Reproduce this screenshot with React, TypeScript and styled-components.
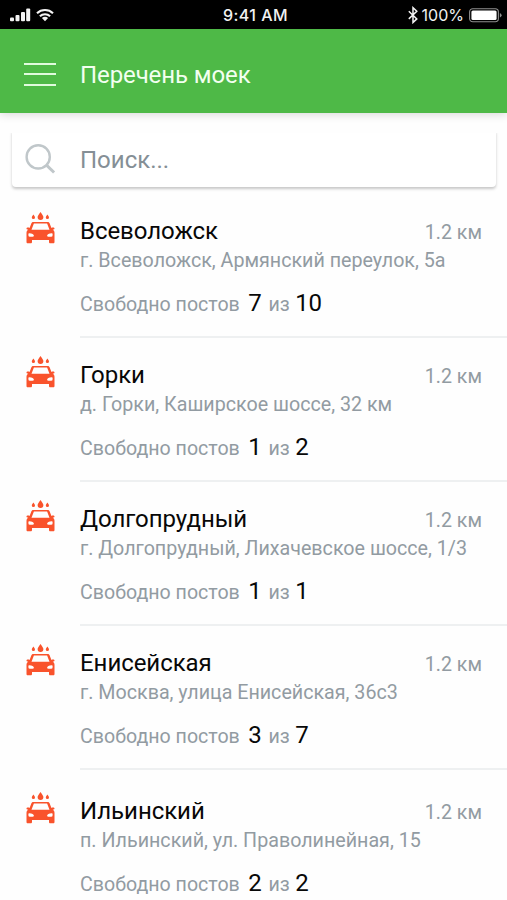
import React from "react";
import styled, { createGlobalStyle } from "styled-components";

const GlobalStyle = createGlobalStyle`
  * { box-sizing: border-box; }
  html, body { margin: 0; padding: 0; background: #fefefe; overflow: hidden; }
  body { font-family: Roboto, "Noto Sans", sans-serif; }
`;

const Screen = styled.div`
  width: 507px;
  height: 900px;
  overflow: hidden;
  display: flex;
  flex-direction: column;
  background: #fefefe;
`;

const StatusBar = styled.div`
  flex: none;
  height: 29px;
  background: #000;
  color: #f2f2f2;
  display: grid;
  grid-template-columns: 1fr auto 1fr;
  align-items: center;
  padding: 1px 5px 0 10px;
  font: 500 15.5px/20px Inter, "Liberation Sans", sans-serif;
`;

const StatusGroup = styled.div<{ $end?: boolean }>`
  display: flex;
  align-items: center;
  justify-content: ${(p) => (p.$end ? "flex-end" : "flex-start")};
  gap: 5px;
`;

const Time = styled.span`
  font-weight: 500;
  font-size: 16px;
  letter-spacing: 0.45px;
  margin-right: 1px;
`;

const Percent = styled.span`
  font-weight: 400;
  font-size: 16px;
  margin-left: -1px;
`;

const Header = styled.header`
  flex: none;
  height: 84px;
  background: #4eb947;
  box-shadow: 0 1px 9px rgba(0, 0, 0, 0.17);
  display: flex;
  align-items: center;
  padding: 7px 24px 0;
`;

const MenuButton = styled.button`
  width: 32px;
  height: 23px;
  margin-bottom: 1px;
  padding: 0;
  border: 0;
  background: none;
  display: flex;
  flex-direction: column;
  justify-content: space-between;
`;

const MenuLine = styled.span`
  display: block;
  width: 32px;
  height: 2px;
  background: #e0fbdd;
`;

const Heading = styled.h1`
  margin: 0 0 0 24px;
  color: #f2fff0;
  font-weight: 400;
  font-size: 24px;
  line-height: 30px;
  letter-spacing: -0.1px;
`;

const SearchBox = styled.label`
  flex: none;
  margin: 16px 11px 0 12px;
  height: 58px;
  border-radius: 4px;
  background: #fff;
  box-shadow: 0 2px 3px rgba(0, 0, 0, 0.22);
  clip-path: inset(4px -6px -8px -6px);
  display: flex;
  align-items: center;
  padding: 4px 12px 0;
  gap: 23px;
`;

const SearchInput = styled.input`
  flex: 1;
  min-width: 0;
  padding: 0;
  border: 0;
  outline: 0;
  background: none;
  font: 400 24px/30px Roboto, sans-serif;
  &::placeholder { color: #858f96; opacity: 1; }
`;

const List = styled.ul`
  list-style: none;
  margin: 20px 0 0;
  padding: 0;
`;

const Row = styled.li<{ $offset?: number }>`
  display: flex;
  height: 144px;
  margin-top: ${(p) => p.$offset ?? 0}px;
  padding-left: 25px;
`;

const IconCell = styled.div`
  flex: none;
  width: 55px;
  padding-top: 4px;
`;

const Details = styled.div<{ $last?: boolean }>`
  flex: 1;
  min-width: 0;
  height: 131px;
  padding-top: 9px;
  border-bottom: 2px solid ${(p) => (p.$last ? "transparent" : "#eef0f1")};
`;

const TitleLine = styled.div`
  display: flex;
  justify-content: space-between;
  align-items: baseline;
  padding-right: 25px;
  height: 30px;
`;

const Name = styled.h2`
  margin: 0;
  font-weight: 400;
  font-size: 24px;
  line-height: 30px;
  letter-spacing: -0.05px;
  color: #080808;
`;

const Distance = styled.span`
  font-size: 19.6px;
  line-height: 30px;
  color: #929ba2;
`;

const Address = styled.div`
  margin-top: 2px;
  font-size: 19.68px;
  line-height: 26px;
  color: #929ba2;
  white-space: nowrap;
`;

const Slots = styled.div`
  display: flex;
  align-items: baseline;
  margin-top: 14px;
  font-size: 19.6px;
  line-height: 30px;
  color: #929ba2;
  white-space: nowrap;
`;

const Count = styled.b`
  font-weight: 400;
  font-size: 24px;
  letter-spacing: -0.3px;
  color: #080808;
  margin: 0 7px 0 8.5px;
`;

const Total = styled(Count)`
  margin: 0 0 0 5.5px;
`;

const Signal = () => (
  <svg width="21" height="14" viewBox="0 0 21 14" fill="#f4f4f4">
    <rect x="0" y="9.5" width="4" height="3.7" rx="1" />
    <rect x="5.5" y="7" width="4" height="6.2" rx="1" />
    <rect x="11" y="4" width="4" height="9.2" rx="1" />
    <rect x="16.2" y="0.5" width="4" height="12.7" rx="1" />
  </svg>
);

const Wifi = () => (
  <svg width="18" height="14" viewBox="0 0 18 14">
    <g fill="none" stroke="#f4f4f4" strokeWidth="2.1">
      <path d="M1 5.2a11.6 11.6 0 0 1 16 0" />
      <path d="M3.9 8.3a7.3 7.3 0 0 1 10.2 0" />
    </g>
    <path d="M5.9 10.1a4.5 4.5 0 0 1 6.2 0L9 13.3z" fill="#f4f4f4" />
  </svg>
);

const Bluetooth = () => (
  <svg width="10" height="18" viewBox="0 0 10 18" fill="none" stroke="#f4f4f4" strokeWidth="1.5">
    <path d="M0.8 5.3l8 7.6L5 16.5V1.7l3.8 3.6-8 7.6" />
  </svg>
);

const Battery = () => (
  <svg width="33" height="15" viewBox="0 0 33 15">
    <rect x="0.6" y="0.8" width="28.8" height="13" rx="3.2" fill="none" stroke="#8f8f8f" strokeWidth="1.1" />
    <rect x="2.4" y="2.6" width="25.2" height="9.4" rx="1.5" fill="#fff" />
    <path d="M30.9 5.1q1.7.7 1.7 2.2t-1.7 2.2z" fill="#8f8f8f" />
  </svg>
);

const SearchIcon = () => (
  <svg width="33" height="32" viewBox="0 0 33 32" fill="none" stroke="#c0c7ca" strokeWidth="2.4">
    <circle cx="14.2" cy="12.9" r="11.6" />
    <path d="M22.5 21.2l7.6 7.3" strokeWidth="3" />
  </svg>
);

const CarWashIcon = () => (
  <svg width="31" height="34" viewBox="0 0 31 34" fill="#f9532c">
    <path d="M15.5 0.9c1.1 1.9 2.9 3.4 2.9 5.2a2.9 2.9 0 0 1-5.8 0c0-1.8 1.8-3.3 2.9-5.2z" />
    <path d="M8.4 3.5c.6 1.2 1.6 1.8 1.6 3a1.6 1.6 0 0 1-3.2 0c0-1.2 1-1.8 1.6-3z" />
    <path d="M22.4 3.5c.6 1.2 1.6 1.8 1.6 3a1.6 1.6 0 0 1-3.2 0c0-1.2 1-1.8 1.6-3z" />
    <path
      fillRule="evenodd"
      d="M8.5 10.9h14c1.1 0 1.7.4 2.1 1.4l1.8 4.6c.9-.6 3.1-.7 3.1.5 0 .9-.8 1.1-1.8 1.2 1.2.9 1.8 1.9 1.8 3.4v9c0 .8-.5 1.3-1.3 1.3h-2.9c-.8 0-1.3-.5-1.3-1.3v-1.9H7V31c0 .8-.5 1.3-1.3 1.3H2.8c-.8 0-1.3-.5-1.3-1.3v-9c0-1.5.6-2.5 1.8-3.4-1-.1-1.8-.3-1.8-1.2 0-1.2 2.2-1.1 3.1-.5l1.8-4.6c.4-1 1-1.4 2.1-1.4zm.4 1.5-2.4 6.3h18l-2.4-6.3zM3.4 22.9q0-.8.9-.7 4.3.5 4.6 2.2 0 1.4-1.4 1.4H4.9q-1.5 0-1.5-1.5zm24.2 0q0-.8-.9-.7-4.3.5-4.6 2.2 0 1.4 1.4 1.4h2.6q1.5 0 1.5-1.5z"
    />
  </svg>
);

const washes = [
  { name: "Всеволожск", address: "г. Всеволожск, Армянский переулок, 5а", free: 7, total: 10 },
  { name: "Горки", address: "д. Горки, Каширское шоссе, 32 км", free: 1, total: 2 },
  { name: "Долгопрудный", address: "г. Долгопрудный, Лихачевское шоссе, 1/3", free: 1, total: 1 },
  { name: "Енисейская", address: "г. Москва, улица Енисейская, 36с3", free: 3, total: 7 },
  { name: "Ильинский", address: "п. Ильинский, ул. Праволинейная, 15", free: 2, total: 2, offset: 3.5 },
];

export default function App() {
  return (
    <>
      <GlobalStyle />
      <Screen>
        <StatusBar>
          <StatusGroup>
            <Signal />
            <Wifi />
          </StatusGroup>
          <Time>9:41 AM</Time>
          <StatusGroup $end>
            <Bluetooth />
            <Percent>100%</Percent>
            <Battery />
          </StatusGroup>
        </StatusBar>
        <Header>
          <MenuButton aria-label="Меню">
            <MenuLine />
            <MenuLine />
            <MenuLine />
          </MenuButton>
          <Heading>Перечень моек</Heading>
        </Header>
        <SearchBox>
          <SearchIcon />
          <SearchInput placeholder="Поиск..." />
        </SearchBox>
        <List>
          {washes.map((w, i) => (
            <Row key={w.name} $offset={w.offset}>
              <IconCell>
                <CarWashIcon />
              </IconCell>
              <Details $last={i === washes.length - 1}>
                <TitleLine>
                  <Name>{w.name}</Name>
                  <Distance>1.2 км</Distance>
                </TitleLine>
                <Address>{w.address}</Address>
                <Slots>
                  Свободно постов <Count>{w.free}</Count> из <Total>{w.total}</Total>
                </Slots>
              </Details>
            </Row>
          ))}
        </List>
      </Screen>
    </>
  );
}
